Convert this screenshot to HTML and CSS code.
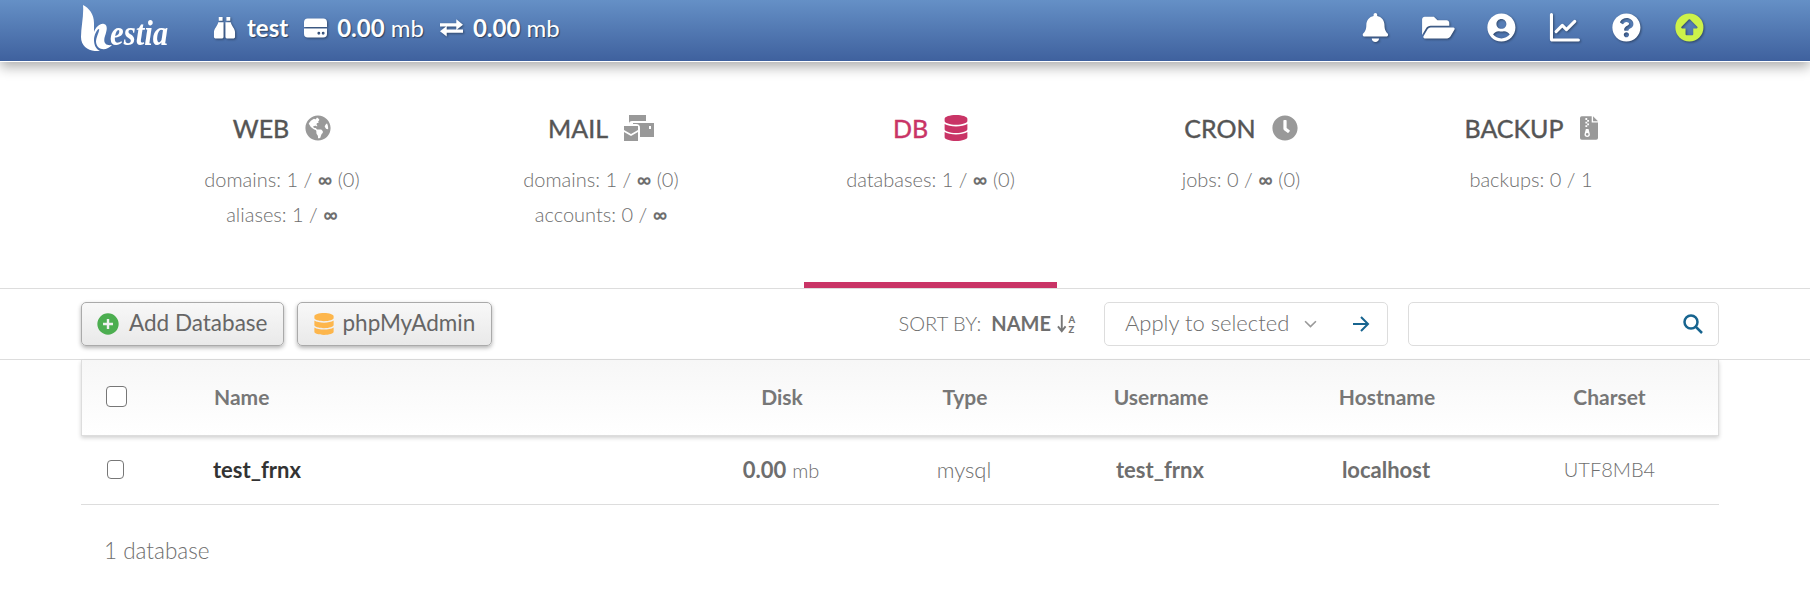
FILE: index.html
```html
<!DOCTYPE html>
<html lang="en">
<head>
<meta charset="utf-8">
<title>Hestia - DB</title>
<link rel="stylesheet" href="styles.css">
</head>
<body>
<header class="topbar">
  <a class="logo">
    <svg class="logo-h" viewBox="0 0 34 46"><path d="M2 0C8 3 13 9 13 18v9c2-5 6-9 10-8 4 1 3 6 1 12-2 6 0 10 7 9-5 6-15 6-16-3 0-5 4-11 3-13-2 0-5 6-5 11 0 5 2 9 6 11-9 1-19-3-19-14C0 22 3 10 2 0z"/></svg>
    <span class="logo-text">estia</span>
  </a>
  <div class="user-stats">
    <svg class="ic-bin" viewBox="0 0 24 24"><path d="M6 1h4v4H6zM14 1h4v4h-4zM5.500 6.500H11V22a1.500 1.500 0 0 1-1.500 1.500h-7A1.500 1.500 0 0 1 1 22v-5c0-4 3.500-6 4.500-10.500zM13 6.500h5.500C19.500 11 23 13 23 17v5a1.500 1.500 0 0 1-1.500 1.500h-7A1.500 1.500 0 0 1 13 22z"/></svg>
    <b class="user">test</b>
    <svg class="ic-hdd" viewBox="0 0 24 20"><path d="M4 0h16a4 4 0 0 1 4 4v5H0V4a4 4 0 0 1 4-4zM0 10.500h24V16a4 4 0 0 1-4 4H4a4 4 0 0 1-4-4zm15.500 3.500a1.500 1.500 0 1 0 0 3 1.500 1.500 0 0 0 0-3zm4.500 0a1.500 1.500 0 1 0 0 3 1.500 1.500 0 0 0 0-3z" fill-rule="evenodd"/></svg>
    <span class="stat"><b>0.00</b> mb</span>
    <svg class="ic-ex" viewBox="0 0 24 20"><path d="M0 5h17V1l7 5.500-7 5.500V8.500H0zM24 11.500V15H7v4l-7-5.500L7 8v3.500z"/></svg>
    <span class="stat"><b>0.00</b> mb</span>
  </div>
  <nav class="top-icons">
    <svg class="ti" viewBox="0 0 448 512"><path d="M224 512c35.32 0 63.97-28.65 63.97-64H160.03c0 35.35 28.65 64 63.97 64zm215.39-149.71c-19.32-20.76-55.47-51.99-55.47-154.29 0-77.7-54.48-139.9-127.94-155.16V32c0-17.67-14.32-32-31.98-32s-31.98 14.33-31.98 32v20.84C118.56 68.1 64.08 130.3 64.08 208c0 102.3-36.15 133.53-55.47 154.29-6 6.45-8.66 14.16-8.61 21.71.11 16.4 12.98 32 32.1 32h383.8c19.12 0 32-15.6 32.1-32 .05-7.55-2.61-15.27-8.61-21.71z"/></svg>
    <svg class="ti" viewBox="0 0 576 512"><path d="M572.694 292.093L500.27 416.248A63.997 63.997 0 0 1 444.989 448H45.025c-18.523 0-30.064-20.093-20.731-36.093l72.424-124.155A64 64 0 0 1 152 256h399.964c18.523 0 30.064 20.093 20.73 36.093zM152 224h328v-48c0-26.51-21.49-48-48-48H272l-64-64H48C21.49 64 0 85.49 0 112v278.046l69.077-118.418C86.214 242.25 117.989 224 152 224z"/></svg>
    <svg class="ti" viewBox="0 0 496 512"><path d="M248 8C111 8 0 119 0 256s111 248 248 248 248-111 248-248S385 8 248 8zm0 96c48.6 0 88 39.4 88 88s-39.4 88-88 88-88-39.4-88-88 39.4-88 88-88zm0 344c-58.7 0-111.3-26.6-146.5-68.2 18.8-35.4 55.6-59.8 98.5-59.8 2.4 0 4.8.4 7.1 1.1 13 4.2 26.6 6.9 40.9 6.9 14.3 0 28-2.7 40.9-6.9 2.3-.7 4.7-1.1 7.1-1.1 42.9 0 79.7 24.4 98.5 59.8C359.3 421.4 306.7 448 248 448z"/></svg>
    <svg class="ti" viewBox="0 0 28 28"><path class="chart" d="M1.500 1.500V25a1 1 0 0 0 1 1h25M6 18l6-6 4 4 8-8"/></svg>
    <svg class="ti" viewBox="0 0 512 512"><path d="M504 256c0 136.997-111.043 248-248 248S8 392.997 8 256C8 119.083 119.043 8 256 8s248 111.083 248 248zM262.655 90c-54.497 0-89.255 22.957-116.549 63.758-3.536 5.286-2.353 12.415 2.715 16.258l34.699 26.31c5.205 3.947 12.621 3.008 16.665-2.122 17.864-22.658 30.113-35.797 57.303-35.797 20.429 0 45.698 13.148 45.698 32.958 0 14.976-12.363 22.667-32.534 33.976C247.128 238.528 216 254.941 216 296v4c0 6.627 5.373 12 12 12h56c6.627 0 12-5.373 12-12v-1.333c0-28.462 83.186-29.647 83.186-106.667 0-58.002-60.165-102-116.531-102zM256 338c-25.365 0-46 20.635-46 46 0 25.364 20.635 46 46 46s46-20.636 46-46c0-25.365-20.635-46-46-46z"/></svg>
    <svg class="ti ti-up" viewBox="0 0 512 512"><path fill-rule="evenodd" d="M256 8a248 248 0 1 0 0 496 248 248 0 0 0 0-496zM243 116a18 18 0 0 1 26 0l126 126c11 12 3 30-13 30h-58v104a18 18 0 0 1-18 18h-100a18 18 0 0 1-18-18V272h-58c-16 0-24-18-13-30z"/></svg>
  </nav>
</header>

<section class="tabs">
  <div class="tab">
    <h3>WEB <svg class="th-ic" viewBox="0 0 496 512"><path d="M248 8C111.030 8 0 119.030 0 256s111.030 248 248 248 248-111.030 248-248S384.970 8 248 8zm82.290 357.600c-3.900 3.880-7.990 7.950-11.310 11.280-2.990 3-5.100 6.700-6.170 10.710-1.510 5.660-2.730 11.380-4.770 16.870l-17.390 46.850c-13.760 3-28 4.690-42.650 4.690v-27.380c1.690-12.620-7.640-36.260-22.630-51.250-6-6-9.370-14.140-9.370-22.630v-32.010c0-11.640-6.270-22.340-16.460-27.970-14.370-7.950-34.810-19.060-48.810-26.110-11.480-5.780-22.100-13.140-31.650-21.750l-.8-.72a114.792 114.792 0 0 1-18.060-20.740c-9.380-13.770-24.660-36.420-34.590-51.140 20.470-45.500 57.360-82.040 103.200-101.890l24.010 12.010C203.480 89.740 216 82.010 216 70.110v-11.300c7.990-1.290 16.120-2.110 24.390-2.420l28.300 28.300c6.250 6.250 6.250 16.380 0 22.630L264 112l-10.340 10.340c-3.120 3.120-3.120 8.190 0 11.310l4.690 4.690c3.120 3.120 3.120 8.190 0 11.310l-8 8a8.008 8.008 0 0 1-5.660 2.340h-8.990c-2.080 0-4.080.81-5.580 2.270l-9.920 9.650a8.008 8.008 0 0 0-1.580 9.310l15.590 31.190c2.660 5.320-1.210 11.580-7.150 11.580h-5.640c-1.930 0-3.790-.7-5.240-1.960l-9.280-8.060a16.017 16.017 0 0 0-15.550-3.100l-31.170 10.390a11.950 11.950 0 0 0-8.170 11.340c0 4.530 2.560 8.660 6.610 10.690l11.080 5.540c9.410 4.710 19.790 7.160 30.310 7.160s22.590 27.290 32 32h66.750c8.490 0 16.620 3.370 22.630 9.370l13.690 13.690a30.503 30.503 0 0 1 8.930 21.570 46.536 46.536 0 0 1-13.720 32.980zM417 274.250c-5.790-1.450-10.840-5-14.150-9.970l-17.980-26.970a23.970 23.970 0 0 1 0-26.620l19.590-29.380c2.320-3.470 5.500-6.290 9.240-8.150l12.980-6.490C440.200 193.590 448 223.870 448 256c0 8.670-.74 17.160-1.820 25.540L417 274.250z"/></svg></h3>
    <p>domains: 1 / <i>∞</i> (0)</p>
    <p>aliases: 1 / <i>∞</i></p>
  </div>
  <div class="tab">
    <h3>MAIL <svg class="th-ic th-mail" viewBox="0 0 30 26"><path d="M5 0h17v6H8a3 3 0 0 0-3 3zM9 8h21v14H16v-9a4 4 0 0 0-4-4H9zm16 3v3h2v-3zM0 11h14v4l-7 4-7-4zM0 17l7 4 7-4v9H0z"/></svg></h3>
    <p>domains: 1 / <i>∞</i> (0)</p>
    <p>accounts: 0 / <i>∞</i></p>
  </div>
  <div class="tab active">
    <h3>DB <svg class="th-ic th-db" viewBox="0 0 448 512"><path d="M448 73.143v45.714C448 159.143 347.667 192 224 192S0 159.143 0 118.857V73.143C0 32.857 100.333 0 224 0s224 32.857 224 73.143zM448 176v102.857C448 319.143 347.667 352 224 352S0 319.143 0 278.857V176c48.125 33.143 136.208 48.572 224 48.572S399.874 209.143 448 176zm0 160v102.857C448 479.143 347.667 512 224 512S0 479.143 0 438.857V336c48.125 33.143 136.208 48.572 224 48.572S399.874 369.143 448 336z"/></svg></h3>
    <p>databases: 1 / <i>∞</i> (0)</p>
  </div>
  <div class="tab">
    <h3>CRON <svg class="th-ic" viewBox="0 0 512 512"><path d="M256,8C119,8,8,119,8,256S119,504,256,504,504,393,504,256,393,8,256,8Zm92.49,313h0l-20,25a16,16,0,0,1-22.49,2.5h0l-67-49.72a40,40,0,0,1-15-31.23V112a16,16,0,0,1,16-16h32a16,16,0,0,1,16,16V256l58,42.5A16,16,0,0,1,348.49,321Z"/></svg></h3>
    <p>jobs: 0 / <i>∞</i> (0)</p>
  </div>
  <div class="tab">
    <h3>BACKUP <svg class="th-ic th-file" viewBox="0 0 20 26"><path fill-rule="evenodd" d="M2 0h11v7h7v17a2 2 0 0 1-2 2H2a2 2 0 0 1-2-2V2a2 2 0 0 1 2-2zM6 2v2h2V2zM8 4v2h2V4zM6 6v2h2V6zM8 8v2h2V8zM6 10v2h2v-2zM6.500 14L5 20a3 3 0 0 0 6 0l-1.500-6zM8 18.500a1.500 1.500 0 1 1 0 3 1.500 1.500 0 0 1 0-3z"/><path d="M14.500 0L20 5.500h-5.500z"/></svg></h3>
    <p>backups: 0 / 1</p>
  </div>
</section>

<section class="toolbar">
  <div class="tb-left">
    <a class="btn"><svg class="btn-ic add" viewBox="0 0 512 512"><path fill-rule="evenodd" d="M256 8a248 248 0 1 0 0 496 248 248 0 0 0 0-496zM228 140h56v88h88v56h-88v88h-56v-88h-88v-56h88z"/></svg>Add Database</a>
    <a class="btn"><svg class="btn-ic pma" viewBox="0 0 448 512"><path d="M448 73.143v45.714C448 159.143 347.667 192 224 192S0 159.143 0 118.857V73.143C0 32.857 100.333 0 224 0s224 32.857 224 73.143zM448 176v102.857C448 319.143 347.667 352 224 352S0 319.143 0 278.857V176c48.125 33.143 136.208 48.572 224 48.572S399.874 209.143 448 176zm0 160v102.857C448 479.143 347.667 512 224 512S0 479.143 0 438.857V336c48.125 33.143 136.208 48.572 224 48.572S399.874 369.143 448 336z"/></svg>phpMyAdmin</a>
  </div>
  <div class="tb-right">
    <div class="sort">SORT BY: <b>NAME</b>
      <svg class="sort-ic" viewBox="0 0 22 22"><path class="sort-arrow" d="M5 2v17M1 14l4 5 4-5"/><text x="12" y="10" class="sort-t">A</text><text x="12" y="21" class="sort-t">Z</text></svg>
    </div>
    <div class="select">
      <span>Apply to selected</span>
      <svg class="chev" viewBox="0 0 12 8"><path d="M1 1l5 5 5-5"/></svg>
      <svg class="arrow" viewBox="0 0 18 16"><path d="M1 8h15M9 1l7 7-7 7"/></svg>
    </div>
    <div class="search">
      <svg class="mag" viewBox="0 0 20 20"><circle cx="8" cy="8" r="6.500"/><path d="M13 13l6 6"/></svg>
    </div>
  </div>
</section>

<section class="table">
  <div class="row head">
    <span class="cell"><span class="check big"></span></span>
    <span class="cell name">Name</span>
    <span class="cell">Disk</span>
    <span class="cell">Type</span>
    <span class="cell">Username</span>
    <span class="cell">Hostname</span>
    <span class="cell">Charset</span>
  </div>
  <div class="row body">
    <span class="cell"><span class="check"></span></span>
    <span class="cell name"><b class="dark">test_frnx</b></span>
    <span class="cell"><b>0.00</b> <small>mb</small></span>
    <span class="cell">mysql</span>
    <span class="cell"><b>test_frnx</b></span>
    <span class="cell"><b>localhost</b></span>
    <span class="cell caps">UTF8MB4</span>
  </div>
</section>
<p class="total">1 database</p>
</body>
</html>
```
FILE: styles.css
```css
* { box-sizing: border-box; }
html, body { margin: 0; padding: 0; }
body { width: 1810px; height: 592px; overflow: hidden; background: #fff; font-family: "Lato", "Liberation Sans", sans-serif; font-weight: 300; color: #6e6e6e; }
svg { display: block; fill: currentColor; flex: none; }
h3, p { margin: 0; }

.topbar { height: 62px; display: flex; align-items: center; padding: 0 0 6px 81px; color: #fff; background: linear-gradient(#6590c6, #3f619e); border-bottom: 1px solid #fff; box-shadow: 0 5px 12px rgba(0,0,0,.32); position: relative; }
.logo { display: flex; align-items: flex-end; width: 87px; height: 47px; }
.logo-h { width: 34px; height: 46px; }
.logo-text { font-family: "Liberation Serif", serif; font-style: italic; font-weight: 700; font-size: 35px; line-height: 34px; margin-left: -5px; transform: scaleX(.88); transform-origin: left; }
.user-stats { display: flex; align-items: center; margin-left: 45px; font-size: 24px; text-shadow: 1px 1px 1px rgba(0,0,0,.45); }
.user-stats svg { filter: drop-shadow(1px 1px 1px rgba(0,0,0,.4)); }
.user-stats b { font-weight: 700; }
.ic-bin { width: 23px; height: 23px; margin-right: 11px; }
.user { margin-right: 16px; }
.ic-hdd { width: 23px; height: 20px; margin-right: 10px; }
.stat { margin-right: 16px; font-weight: 400; }
.ic-ex { width: 23px; height: 20px; margin-right: 10px; }
.top-icons { display: flex; align-items: center; margin-left: auto; margin-right: 89px; filter: drop-shadow(1px 1px 1px rgba(0,0,0,.4)); }
.ti { height: 29px; width: 62.800px; }
.chart { fill: none; stroke: #fff; stroke-width: 3; stroke-linecap: round; stroke-linejoin: round; }
.ti-up { color: #cdf24a; }

.tabs { display: grid; grid-template-columns: 232px 406px 253px 368px 212px; margin-left: 166px; height: 226px; text-align: center; }
.tab { padding-top: 50px; font-size: 20px; line-height: 35px; position: relative; color: #6e6e6e; }
.tab h3 { display: flex; justify-content: center; align-items: center; gap: 16px; font-size: 25px; font-weight: 400; -webkit-text-stroke: .4px currentColor; color: #555; line-height: 32px; height: 32px; margin-bottom: 18px; }
.tab i { font-style: normal; font-weight: 700; }
.th-ic { width: 26px; height: 26px; color: #999; }
.th-mail { width: 30px; }
.th-file { width: 18px; }
.th-db { width: 24px; height: 26px; }
.tab.active h3 { color: #c93466; }
.tab.active h3 .th-ic { color: #c93466; }
.tab.active::after { content: ""; position: absolute; left: 0; right: 0; bottom: 0; height: 6px; background: #c93466; }

.toolbar { height: 72px; display: flex; justify-content: space-between; align-items: center; padding: 0 91px 0 81px; border-top: 1px solid #ddd; border-bottom: 1px solid #ddd; }
.tb-left, .tb-right { display: flex; align-items: center; }
.tb-left { gap: 13px; }
.btn { height: 44px; display: flex; align-items: center; padding: 0 16px 3px 15px; gap: 10px; font-size: 22.500px; font-weight: 400; color: #666; border: 1px solid #aaa; border-radius: 5px; background: linear-gradient(#f8f8f8, #e9e9e9); box-shadow: 0 2px 4px rgba(0,0,0,.3); }
.btn-ic { width: 22px; height: 22px; margin-top: 3px; }
.add { color: #4cae50; }
.pma { color: #fdb64c; margin-right: -3px; }
.sort { font-size: 20px; color: #6e6e6e; display: flex; align-items: center; gap: 10px; margin-right: 26px; padding-bottom: 2px; }
.sort b { font-weight: 700; color: #6e6e6e; }
.sort-ic { width: 21px; height: 21px; margin-left: -4px; }
.sort-arrow { fill: none; stroke: #777; stroke-width: 2; }
.sort-t { font-size: 10px; font-weight: 900; fill: #777; }
.select { width: 284px; height: 44px; display: flex; align-items: center; padding: 0 17px 3px 20px; font-size: 22px; color: #6e6e6e; border: 1px solid #ddd; border-radius: 5px; margin-right: 20px; }
.chev { width: 13px; height: 9px; margin: 3px 0 0 15px; fill: none; stroke: #999; stroke-width: 1.500; }
.arrow { width: 18px; height: 16px; margin: 3px 0 0 auto; fill: none; stroke: #17648f; stroke-width: 2; }
.search { width: 311px; height: 44px; display: flex; align-items: center; justify-content: flex-end; padding-right: 15px; border: 1px solid #ddd; border-radius: 5px; }
.mag { width: 20px; height: 20px; fill: none; stroke: #17648f; stroke-width: 2.500; }

.table { margin: 0 91px 0 81px; }
.row { display: grid; grid-template-columns: 132px 487px 162px 204px 188px 264px 1fr; align-items: center; text-align: center; padding: 0 18px 2px 0; }
.head { height: 76px; font-size: 21px; background: linear-gradient(#f7f7f7, #fff); border: 1px solid #ddd; border-top: 0; box-shadow: 0 2px 4px rgba(0,0,0,.18); font-weight: 700; color: #777; }
.body { height: 69px; font-size: 22px; border-bottom: 1px solid #ddd; }
.name { text-align: left; }
.check { display: block; width: 17px; height: 19px; margin-left: 26px; border: 1px solid #777; border-radius: 4px; background: #fff; }
.check.big { width: 21px; height: 21px; margin-left: 24px; }
.row b { font-weight: 700; }
.dark { color: #333; }
.row small { font-size: 20px; }
.caps { font-size: 20px; }
.total { margin: 32px 0 0 104px; font-size: 22.500px; line-height: 28px; color: #6e6e6e; }
```
